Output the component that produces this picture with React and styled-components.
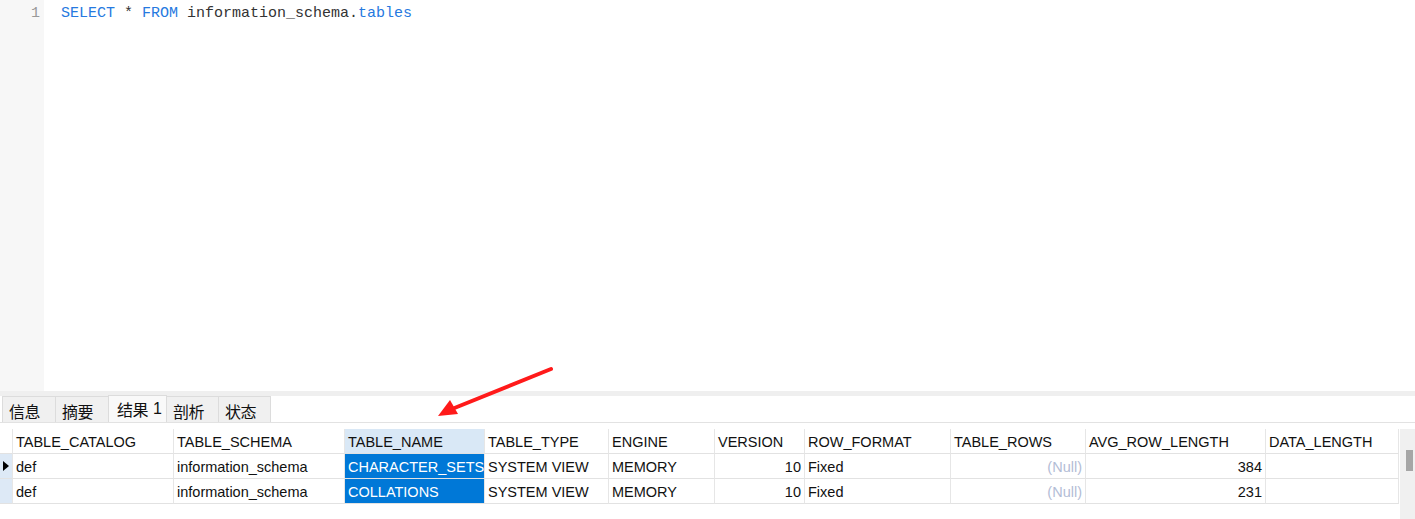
import React from 'react';
import styled, { createGlobalStyle } from 'styled-components';

const GlobalStyle = createGlobalStyle`
  html, body {
    margin: 0;
    padding: 0;
    background: #ffffff;
  }
  body {
    font-family: "Liberation Sans", "Noto Sans CJK SC", sans-serif;
    overflow: hidden;
  }
`;

const Page = styled.div`
  position: relative;
  width: 1415px;
  height: 519px;
  display: flex;
  flex-direction: column;
  overflow: hidden;
  background: #fff;
`;

const Editor = styled.div`
  height: 391px;
  display: flex;
`;

const Gutter = styled.div`
  width: 44px;
  background: #f7f7f7;
  color: #999;
  font-family: "Liberation Mono", monospace;
  font-size: 15px;
  text-align: right;
  padding: 5px 4px 0 0;
  box-sizing: border-box;
  line-height: 18px;
`;

const Code = styled.div`
  padding: 5px 0 0 17px;
  font-family: "Liberation Mono", monospace;
  font-size: 15px;
  line-height: 18px;
  color: #333;
  white-space: pre;
`;

const Kw = styled.span`
  color: #2679e0;
`;

const Splitter = styled.div`
  height: 5px;
  background: #efefef;
`;

const TabBar = styled.div`
  height: 26px;
  display: flex;
  align-items: flex-end;
  padding-left: 2px;
  border-bottom: 1px solid #e2e2e2;
`;

const Tab = styled.div`
  width: ${p => p.$w}px;
  height: ${p => (p.$active ? '27px' : '26px')};
  box-sizing: border-box;
  padding: 0 0 0 ${p => (p.$active ? 8 : 6)}px;
  display: flex;
  align-items: center;
  font-size: 15px;
  color: #111;
  background: ${p => (p.$active ? '#f9f9f9' : '#f0f0f0')};
  border: 1px solid #dcdcdc;
  border-bottom: none;
  margin-right: -1px;
  padding-top: ${p => (p.$active ? '0' : '2px')};
`;

const CjkText = styled.span`
  font-family: "Noto Sans CJK SC", sans-serif;
  font-size: 16px;
  letter-spacing: -0.5px;
`;

const TabNum = styled.span`
  margin-left: 5px;
  font-size: 16px;
`;

const GridWrap = styled.div`
  margin-top: 6px;
  display: flex;
  flex: 1;
`;

const Grid = styled.div`
  width: 1400px;
  display: grid;
  grid-template-columns: 13px 161px 171px 140px 124px 106px 90px 146px 135px 180px 133px;
  grid-auto-rows: 25px;
  align-content: start;
`;

const Cell = styled.div`
  box-sizing: border-box;
  border-right: 1px solid #e6e6e6;
  border-bottom: 1px solid #e2e2e2;
  padding: 1px 3px 0;
  font-size: 14.5px;
  line-height: 24px;
  white-space: nowrap;
  overflow: hidden;
  text-align: ${p => (p.$right ? 'right' : 'left')};
  color: ${p => (p.$sel ? '#fff' : p.$null ? '#b3bdd6' : '#111')};
  background: ${p => (p.$sel ? '#0078d7' : p.$hl ? '#d9e8f6' : p.$ind ? '#dde9f6' : '#fff')};
`;

const HeadCell = styled(Cell)`
  height: 25px;
`;

const IndCell = styled(Cell)`
  padding: 0;
  display: flex;
  align-items: center;
  justify-content: center;
`;

const Scrollbar = styled.div`
  width: 15px;
  background: #f0f0f0;
  display: flex;
  justify-content: flex-end;
`;

const Thumb = styled.div`
  width: 7px;
  height: 21px;
  margin-top: 21px;
  margin-right: 2px;
  background: #a6a6a6;
`;

const Arrow = styled.svg`
  position: absolute;
  left: 430px;
  top: 362px;
`;

const columns = [
  'TABLE_CATALOG', 'TABLE_SCHEMA', 'TABLE_NAME', 'TABLE_TYPE', 'ENGINE',
  'VERSION', 'ROW_FORMAT', 'TABLE_ROWS', 'AVG_ROW_LENGTH', 'DATA_LENGTH',
];

const rows = [
  ['def', 'information_schema', 'CHARACTER_SETS', 'SYSTEM VIEW', 'MEMORY', '10', 'Fixed', null, '384', ''],
  ['def', 'information_schema', 'COLLATIONS', 'SYSTEM VIEW', 'MEMORY', '10', 'Fixed', null, '231', ''],
];

const rightCols = [5, 7, 8];

const tabs = [
  { label: '信息', w: 54 },
  { label: '摘要', w: 54 },
  { label: '结果', num: '1', w: 59, active: true },
  { label: '剖析', w: 53 },
  { label: '状态', w: 53 },
];

export default function App() {
  return (
    <>
      <GlobalStyle />
      <Page>
        <Editor>
          <Gutter>1</Gutter>
          <Code>
            <Kw>SELECT</Kw> * <Kw>FROM</Kw> information_schema.<Kw>tables</Kw>
          </Code>
        </Editor>
        <Splitter />
        <TabBar>
          {tabs.map(t => (
            <Tab key={t.label} $w={t.w} $active={t.active}>
              <CjkText>{t.label}</CjkText>
              {t.num && <TabNum>{t.num}</TabNum>}
            </Tab>
          ))}
        </TabBar>
        <GridWrap>
          <Grid>
            <HeadCell />
            {columns.map((c, i) => (
              <HeadCell key={c} $hl={i === 2}>{c}</HeadCell>
            ))}
            {rows.map((r, ri) => (
              <React.Fragment key={ri}>
                <IndCell $ind>
                  {ri === 0 && (
                    <svg width="6" height="10" viewBox="0 0 6 10">
                      <path d="M0 0 L6 5 L0 10 Z" fill="#000" />
                    </svg>
                  )}
                </IndCell>
                {r.map((v, ci) => (
                  <Cell
                    key={ci}
                    $sel={ci === 2}
                    $right={rightCols.includes(ci)}
                    $null={v === null}
                  >
                    {v === null ? '(Null)' : v}
                  </Cell>
                ))}
              </React.Fragment>
            ))}
          </Grid>
          <Scrollbar>
            <Thumb />
          </Scrollbar>
        </GridWrap>
        <Arrow width="130" height="60" viewBox="0 0 130 60">
          <line x1="121" y1="7" x2="22" y2="47" stroke="#ff1a1a" strokeWidth="4" strokeLinecap="round" />
          <path d="M8 54 L20 38 L28 52 Z" fill="#ff1a1a" />
        </Arrow>
      </Page>
    </>
  );
}
